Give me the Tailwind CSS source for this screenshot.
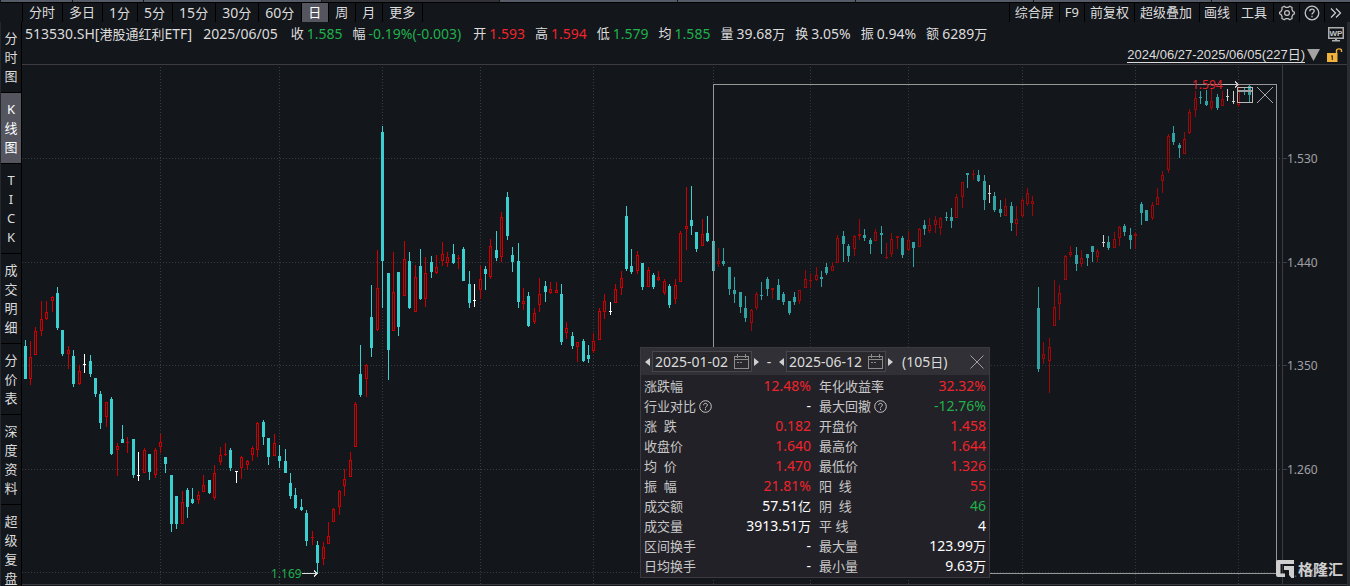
<!DOCTYPE html>
<html lang="zh-CN">
<head>
<meta charset="utf-8">
<title>513530.SH 港股通红利ETF</title>
<script src="https://cdn.jsdelivr.net/npm/@tailwindcss/browser@4"></script>
</head>
<body class="h-screen overflow-hidden bg-[#13161b] font-['Noto_Sans','Noto_Sans_CJK_SC',sans-serif] text-sm text-[#dcdcdc]">
<div class="flex h-full flex-col">
  <div class="flex h-[3px] shrink-0 gap-px border-b border-black bg-[#13161b] pl-px" aria-hidden="true">
    <i class="w-[71px] bg-[#555c68]"></i><i class="w-[70px] bg-[#555c68]"></i><i class="w-[177px] bg-[#555c68]"></i><i class="w-[177px] bg-[#303238]"></i><i class="w-[177px] bg-[#555c68]"></i><i class="w-[177px] bg-[#555c68]"></i><i class="w-[177px] bg-[#555c68]"></i><i class="w-[177px] bg-[#555c68]"></i><i class="flex-1 bg-[#555c68]"></i>
  </div>

  <header class="flex h-[19px] shrink-0 justify-between pr-1 pl-[22px] leading-[19px]">
    <nav class="flex border-l border-black" aria-label="周期">
      <button class="border-r border-black pr-[7px] pl-[6px] text-[13px]">分时</button>
      <button class="border-r border-black pr-[7px] pl-[6px] text-[13px]">多日</button>
      <button class="border-r border-black pr-[7px] pl-[6px]">1<span class="text-[13px]">分</span></button>
      <button class="border-r border-black pr-[7px] pl-[6px]">5<span class="text-[13px]">分</span></button>
      <button class="border-r border-black pr-[7px] pl-[6px]">15<span class="text-[13px]">分</span></button>
      <button class="border-r border-black pr-[7px] pl-[6px]">30<span class="text-[13px]">分</span></button>
      <button class="border-r border-black pr-[7px] pl-[6px]">60<span class="text-[13px]">分</span></button>
      <button class="border-r border-black bg-[#54555f] pr-[7px] pl-[6px] text-[13px] text-white" aria-pressed="true">日</button>
      <button class="border-r border-black pr-[7px] pl-[6px] text-[13px]">周</button>
      <button class="border-r border-black pr-[7px] pl-[6px] text-[13px]">月</button>
      <button class="border-r border-black pr-[7px] pl-[6px] text-[13px]">更多</button>
    </nav>
    <div class="flex text-[13px]">
      <button class="border-l border-black px-[5px]">综合屏</button>
      <button class="border-l border-black px-[5px]">F9</button>
      <button class="border-l border-black px-[5px]">前复权</button>
      <button class="border-l border-black pr-[7px] pl-[5px]">超级叠加</button>
      <button class="border-l border-black pr-[6px] pl-[4px]">画线</button>
      <button class="border-l border-black pr-[6px] pl-[4px]">工具</button>
      <button class="flex w-[26px] items-center justify-center border-l border-black" aria-label="设置">
        <svg class="size-4" viewBox="0 0 16 16" fill="none" stroke="#c4c4c4" stroke-width="1.2"><path d="M5.200 1.200 6.600 2.300h2.800l1.400-1.100 2.300 1.300-.2 1.900 1.200 2.200 1.600.7v1.400l-1.600.7-1.200 2.200.2 1.900-2.300 1.300-1.400-1.100H6.600l-1.400 1.100-2.300-1.300.2-1.900-1.200-2.200L.5 8.700V7.300l1.400-.7 1.200-2.200-.2-1.900z" stroke-linejoin="round"/><circle cx="8" cy="8" r="2.400"/></svg>
      </button>
      <button class="flex w-[25px] items-center justify-center border-l border-black" aria-label="帮助">
        <svg class="size-4" viewBox="0 0 16 16" fill="none" stroke="#c4c4c4" stroke-width="1.300"><circle cx="8" cy="8" r="6.800"/><path d="M5.800 6.300c0-3 4.400-2.800 4.400-.2 0 1.600-2.200 1.600-2.200 3.400M8 10.700v1.500"/></svg>
      </button>
      <button class="flex w-[22px] items-center justify-center border-l border-black" aria-label="展开">
        <svg class="h-3 w-3" viewBox="0 0 12 12" fill="none" stroke="#d0d0d0" stroke-width="1.200"><path d="M1 1.500 5.500 6 1 10.500M6 1.500 10.500 6 6 10.500"/></svg>
      </button>
    </div>
  </header>

  <div class="flex min-h-0 flex-1">
    <nav class="flex w-[22px] shrink-0 flex-col border-l border-[#24282e] text-center text-[13px] leading-[19px]" aria-label="功能">
      <button class="w-full shrink-0 border-r border-b border-black px-[3px] pt-[7px] pb-[6px] break-all">分时图</button>
      <button class="w-full shrink-0 border-r border-b border-black bg-[#54555f] px-[3px] pt-[7px] pb-[6px] break-all text-white" aria-pressed="true">K<br>线图</button>
      <button class="w-full shrink-0 border-r border-b border-black px-[3px] pt-[7px] pb-[6px]">T<br>I<br>C<br>K</button>
      <button class="w-full shrink-0 border-r border-b border-black px-[3px] pt-[7px] pb-[6px] break-all">成交明细</button>
      <button class="w-full shrink-0 border-r border-b border-black px-[3px] pt-[7px] pb-[6px] break-all">分价表</button>
      <button class="w-full shrink-0 border-r border-b border-black px-[3px] pt-[7px] pb-[6px] break-all">深度资料</button>
      <button class="w-full shrink-0 border-r border-b border-black px-[3px] pt-[7px] pb-[6px] break-all">超级复盘</button>
    </nav>

    <main class="flex min-w-0 flex-1 flex-col border-r-[3px] border-[#2a2d32]">
      <div class="flex h-6 shrink-0 items-center justify-between pr-[3px] pl-[3px] whitespace-nowrap">
        <div class="flex gap-[10px]">
          <span>513530.SH[<span class="text-[13px]">港股通红利</span>ETF]</span>
          <span class="pr-[3px] pl-px">2025/06/05</span>
          <span class="flex gap-[3px]"><span class="text-[13px]">收</span><span class="text-[#1fb14c]">1.585</span></span>
          <span class="flex gap-[3px] pr-[2px]"><span class="text-[13px]">幅</span><span class="text-[#1fb14c]">-0.19%(-0.003)</span></span>
          <span class="flex gap-[3px]"><span class="text-[13px]">开</span><span class="text-[#f0242c]">1.593</span></span>
          <span class="flex gap-[3px]"><span class="text-[13px]">高</span><span class="text-[#f0242c]">1.594</span></span>
          <span class="flex gap-[3px]"><span class="text-[13px]">低</span><span class="text-[#1fb14c]">1.579</span></span>
          <span class="flex gap-[3px]"><span class="text-[13px]">均</span><span class="text-[#1fb14c]">1.585</span></span>
          <span class="flex gap-[3px]"><span class="text-[13px]">量</span><span>39.68<span class="text-[13px]">万</span></span></span>
          <span class="flex gap-[3px]"><span class="text-[13px]">换</span><span>3.05%</span></span>
          <span class="flex gap-[3px]"><span class="text-[13px]">振</span><span>0.94%</span></span>
          <span class="flex gap-[3px]"><span class="text-[13px]">额</span><span>6289<span class="text-[13px]">万</span></span></span>
        </div>
        <button aria-label="WP">
          <svg class="h-[15px] w-4" viewBox="0 0 16 15"><rect x=".75" y=".75" width="14.500" height="10.500" fill="none" stroke="#adadad" stroke-width="1.500"/><path d="M7 11h2v2h3v1.500H4V13h3z" fill="#adadad"/><text x="8" y="8.800" text-anchor="middle" font-size="8" font-weight="700" fill="#c4c4c4" font-family="Liberation Sans">WP</text></svg>
        </button>
      </div>
      <div class="flex h-[18px] shrink-0 items-center justify-end gap-[2px] pr-1">
        <a href="#" class="border-b border-[#dcdcdc] font-['Liberation_Sans','Noto_Sans_CJK_SC',sans-serif] text-[13px] leading-[15px]">2024/06/27-2025/06/05(227日)</a>
        <button aria-label="选择区间"><svg class="h-3 w-[13px]" viewBox="0 0 13 12"><path d="M0 0h13L6.500 12z" fill="#a3a3a3"/></svg></button>
        <button class="ml-[5px]" aria-label="锁定"><svg class="h-[14px] w-4" viewBox="0 0 16 14"><path d="M0 5h10.500v9H0z" fill="#f0b23c"/><path d="M9.500 5V2.500C9.500.3 14.500.3 14.500 2.500V4" fill="none" stroke="#f0b23c" stroke-width="1.400"/><path d="M4 8h2M5.300 7.500v4.500" stroke="#3a2b10" stroke-width="1.200"/></svg></button>
      </div>

      <section class="relative min-h-0 flex-1" aria-label="K线图">
        <svg id="chart" class="block h-full w-full" viewBox="22 64 1325 522" preserveAspectRatio="xMinYMin meet" font-size="12" shape-rendering="crispEdges">
          <path d="M22 64.500H1347M22 584.500H1347M1282.500 64V584M1282 158.500h5M1282 262.500h5M1282 365.500h5M1282 469.500h5" stroke="#3b3b40"/>
          <path d="M22 158.500H1282M22 262.500H1282M22 365.500H1282M22 469.500H1282M22 572.500H1282M160.500 67V584M279.500 67V584M382.500 67V584M480.500 67V584M593.500 67V584M713.500 67V584M810.500 67V584M908.500 67V584M1022.500 67V584M1135.500 67V584M1238.500 67V584" stroke="#3c3d40" stroke-dasharray="1 2"/>
          <g id="candles"></g>
          <rect x="713" y="84" width="564" height="490" fill="#181c1c" fill-opacity=".22"/>
          <path d="M713.500 84V573.500H1276.500V84.500H713" fill="none" stroke="#979797"/>
          <g fill="#a0a0a4"><text x="1287" y="163" >1.530</text><text x="1287" y="267">1.440</text><text x="1287" y="370">1.350</text><text x="1287" y="474">1.260</text><text x="1287" y="577" fill="#55585e">1.170</text></g>
          <text x="271" y="578" fill="#1fb14c">1.169</text>
          <path d="M302 573.500h15M314 570.500l3 3-3 3" fill="none" stroke="#dcdcdc"/>
          <text x="1192" y="89" fill="#e2202a">1.594</text>
          <path d="M1223 84.500h15M1235 81.500l3 3-3 3" fill="none" stroke="#c8c8c8"/>
          <g fill="#cfcfcf" shape-rendering="auto">
            <path d="M1278 560h16v4h-13.500v9.500h4.500v3.500h-7a2 2 0 0 1-2-2v-13a2 2 0 0 1 2-2z"/><path d="M1284 566h10v12h-2.500l-2.500-3v-5h-5z"/>
            <text x="1298" y="575" font-size="15" font-weight="700">格隆汇</text>
          </g>
        </svg>

        <button class="absolute top-[23px] left-[1215px] flex size-4 items-start border border-[#b8b8b8] pt-[2px]" aria-label="还原"><span class="block h-[2px] w-full bg-[#a0a0a0]"></span></button>
        <button class="absolute top-[23px] left-[1235px]" aria-label="关闭区间"><svg class="size-4" viewBox="0 0 16 16" stroke="#a8a8a8"><path d="M0 0l16 16M16 0 0 16"/></svg></button>

        <div class="absolute top-[283px] left-[618px] w-[350px] border border-[#3a393f] bg-[#222127]">
          <div class="flex h-[27px] items-center bg-[#313036] pr-[5px] pl-1 whitespace-nowrap">
            <button aria-label="起始日前移"><svg class="h-2 w-[5px]" viewBox="0 0 5 8"><path d="M5 0v8L0 4z" fill="#d0d0d0"/></svg></button>
            <label class="ml-[2px] flex h-[21px] w-[100px] items-center border border-[#47464b] bg-[#29282d] pl-[2px]">
              <input class="min-w-0 flex-1 bg-transparent text-[#dcdcdc]" type="text" value="2025-01-02" aria-label="起始日期">
              <svg class="mr-[2px] h-[15px] w-[15px] shrink-0" viewBox="0 0 15 15" fill="none" stroke="#8c8c8c" shape-rendering="crispEdges"><path d="M.5 2.500h14v12H.5zM.5 5.500h14M3.500 0v4M11.500 0v4M3 8.500h2M6 8.500h2"/></svg>
            </label>
            <button class="ml-[2px]" aria-label="起始日后移"><svg class="h-2 w-[5px]" viewBox="0 0 5 8"><path d="M0 0v8l5-4z" fill="#d0d0d0"/></svg></button>
            <span class="w-[20px] text-center">-</span>
            <button aria-label="结束日前移"><svg class="h-2 w-[5px]" viewBox="0 0 5 8"><path d="M5 0v8L0 4z" fill="#d0d0d0"/></svg></button>
            <label class="ml-[2px] flex h-[21px] w-[100px] items-center border border-[#47464b] bg-[#29282d] pl-[2px]">
              <input class="min-w-0 flex-1 bg-transparent text-[#dcdcdc]" type="text" value="2025-06-12" aria-label="结束日期">
              <svg class="mr-[2px] h-[15px] w-[15px] shrink-0" viewBox="0 0 15 15" fill="none" stroke="#8c8c8c" shape-rendering="crispEdges"><path d="M.5 2.500h14v12H.5zM.5 5.500h14M3.500 0v4M11.500 0v4M3 8.500h2M6 8.500h2"/></svg>
            </label>
            <button class="ml-[2px]" aria-label="结束日后移"><svg class="h-2 w-[5px]" viewBox="0 0 5 8"><path d="M0 0v8l5-4z" fill="#d0d0d0"/></svg></button>
            <span class="ml-[9px]">(105<span class="text-[13px]">日</span>)</span>
            <button class="ml-auto" aria-label="关闭"><svg class="size-[14px]" viewBox="0 0 14 14" stroke="#a0a0a0"><path d="M.5.5l13 13M13.500.5l-13 13"/></svg></button>
          </div>
          <table class="mx-[3px] mt-px mb-px w-[342px] table-fixed leading-5 whitespace-nowrap text-white">
            <colgroup><col class="w-[75px]"><col class="w-[92px]"><col class="w-[83px]"><col class="w-[92px]"></colgroup>
            <tbody class="[&_td]:p-0 [&_td]:text-right [&_th]:p-0 [&_th]:text-left [&_th]:text-[13px] [&_th]:font-normal [&_th]:text-[#c8c8c8] [&_tr]:h-5 [&_th:nth-child(3)]:pl-2">
              <tr><th>涨跌幅</th><td class="text-[#f0242c]">12.48%</td><th>年化收益率</th><td class="text-[#f0242c]">32.32%</td></tr>
              <tr><th><span class="flex items-center gap-[3px]">行业对比<svg class="size-[13px]" viewBox="0 0 13 13" fill="none" stroke="#c8c8c8"><circle cx="6.500" cy="6.500" r="5.800"/><path d="M4.600 5.200c0-2.500 3.800-2.400 3.800-.1 0 1.300-1.900 1.300-1.900 2.600M6.500 8.700v1.400"/></svg></span></th><td>-</td><th><span class="flex items-center gap-[3px]">最大回撤<svg class="size-[13px]" viewBox="0 0 13 13" fill="none" stroke="#c8c8c8"><circle cx="6.500" cy="6.500" r="5.800"/><path d="M4.600 5.200c0-2.500 3.800-2.400 3.800-.1 0 1.300-1.900 1.300-1.900 2.600M6.500 8.700v1.400"/></svg></span></th><td class="text-[#1fb14c]">-12.76%</td></tr>
              <tr><th>涨&nbsp;&nbsp;跌</th><td class="text-[#f0242c]">0.182</td><th>开盘价</th><td class="text-[#f0242c]">1.458</td></tr>
              <tr><th>收盘价</th><td class="text-[#f0242c]">1.640</td><th>最高价</th><td class="text-[#f0242c]">1.644</td></tr>
              <tr><th>均&nbsp;&nbsp;价</th><td class="text-[#f0242c]">1.470</td><th>最低价</th><td class="text-[#f0242c]">1.326</td></tr>
              <tr><th>振&nbsp;&nbsp;幅</th><td class="text-[#f0242c]">21.81%</td><th>阳&nbsp;&nbsp;线</th><td class="text-[#f0242c]">55</td></tr>
              <tr><th>成交额</th><td>57.51<span class="text-[13px]">亿</span></td><th>阴&nbsp;&nbsp;线</th><td class="text-[#1fb14c]">46</td></tr>
              <tr><th>成交量</th><td>3913.51<span class="text-[13px]">万</span></td><th>平&nbsp;线</th><td>4</td></tr>
              <tr><th>区间换手</th><td>-</td><th>最大量</th><td>123.99<span class="text-[13px]">万</span></td></tr>
              <tr><th>日均换手</th><td>-</td><th>最小量</th><td>9.63<span class="text-[13px]">万</span></td></tr>
            </tbody>
          </table>
        </div>
      </section>
    </main>
  </div>
</div>
<script>
// One candle per entry: x, high, body top, body bottom, low, kind (c falling, r rising, w flat).
const data = `25 340 346 379 379 c;30 341 357 379 385 r;35 327 331 355 355 r;41 301 319 331 336 r;46 301 312 319 320 r;52 296 297 301 312 r;57 287 293 328 330 c;62 330 330 354 356 c;68 346 350 354 369 r;73 350 356 384 387 c;79 365 371 384 385 r;84 354 364 365 373 w;90 355 361 374 377 c;95 378 378 394 397 c;100 391 394 423 429 c;106 402 402 417 427 r;111 397 399 454 455 c;117 443 446 450 476 r;122 425 439 443 443 c;127 437 442 443 453 r;133 439 439 475 478 c;138 452 475 476 481 w;144 448 450 473 473 r;149 454 454 472 480 c;155 448 450 475 478 r;160 434 442 447 453 r;165 457 457 464 473 c;171 475 475 524 532 c;176 496 496 524 529 c;182 491 502 524 524 r;187 488 490 507 518 c;192 488 499 503 504 c;198 491 495 500 504 r;203 475 485 492 492 r;209 480 480 493 494 c;214 465 473 498 500 r;220 447 455 462 465 r;225 443 454 455 456 r;230 448 450 468 471 c;236 471 471 472 483 w;241 456 457 468 479 r;247 460 461 465 470 r;252 446 448 455 461 r;257 422 423 450 457 r;263 420 422 437 445 c;268 438 438 457 465 c;274 434 443 456 456 r;279 445 456 461 468 c;285 449 461 473 473 c;290 473 483 496 499 c;295 488 495 508 509 c;301 499 507 510 511 c;306 510 513 541 546 c;312 531 537 538 545 r;317 541 545 563 573 c;323 542 547 559 565 r;328 522 536 544 544 r;333 508 509 522 522 r;339 490 491 507 515 r;344 469 479 486 496 r;350 452 460 477 477 r;355 402 404 447 447 r;360 345 374 395 397 c;366 364 365 379 397 r;371 285 317 348 357 c;377 250 288 330 331 r;382 126 132 261 308 c;388 273 273 350 380 c;393 252 292 331 331 r;398 272 272 327 336 c;404 241 259 296 296 r;409 252 261 308 309 c;415 265 277 312 312 r;420 249 266 299 300 c;425 257 273 299 307 r;431 256 262 272 278 c;436 255 267 273 274 r;442 242 254 261 266 r;447 252 257 263 267 r;453 244 254 263 264 c;458 255 258 259 269 r;463 247 249 281 281 c;469 271 284 303 308 c;474 284 300 301 307 w;480 266 279 290 299 r;485 266 269 274 290 c;490 239 246 277 279 r;496 231 250 258 261 c;501 212 217 257 262 r;507 192 197 236 240 c;512 247 255 262 272 c;518 243 261 302 308 c;523 288 301 304 310 r;528 292 296 326 327 c;534 308 313 322 324 r;539 278 294 305 312 r;545 281 286 292 302 c;550 282 289 293 294 r;556 282 290 293 293 r;561 284 294 342 345 c;566 322 328 333 339 r;572 332 336 346 349 c;577 342 342 347 362 r;583 339 341 361 362 c;588 345 355 359 363 c;593 333 341 351 353 r;599 308 311 340 340 r;604 294 301 312 319 r;610 302 311 312 315 w;615 284 289 303 303 r;621 271 278 288 295 r;626 206 216 269 271 c;631 249 266 272 274 c;637 251 255 271 274 r;642 263 263 287 290 c;648 267 270 287 287 r;653 273 275 287 289 c;658 271 277 280 281 r;664 279 281 293 295 r;669 284 286 305 308 c;675 279 285 299 304 r;680 231 233 282 282 r;686 187 226 229 250 r;691 186 220 226 235 c;696 232 232 249 252 c;702 219 234 246 246 r;707 216 233 241 242 c;713 241 241 271 271 c;718 248 261 264 267 r;723 248 261 264 266 c;729 267 267 289 295 c;734 277 290 294 303 c;740 292 292 307 313 c;745 296 308 318 322 c;751 309 310 323 331 r;756 292 294 308 310 r;761 282 295 296 300 c;767 277 279 289 296 c;772 288 288 290 299 r;778 279 285 300 300 c;783 292 294 302 305 c;789 301 301 313 315 c;794 292 297 302 305 c;799 290 290 301 304 r;805 270 279 288 288 r;810 273 280 281 288 r;816 267 275 280 281 r;821 271 277 279 287 c;826 263 267 273 275 c;832 262 266 271 271 r;837 235 238 263 263 r;843 231 236 244 262 c;848 244 246 256 262 c;854 235 236 249 256 r;859 219 234 236 240 r;864 229 235 238 241 c;870 238 240 244 254 c;875 229 232 241 241 r;881 226 233 235 254 c;886 243 257 258 259 r;891 233 239 254 257 r;897 236 236 238 249 r;902 236 238 255 258 c;908 231 240 250 251 r;913 242 242 248 267 c;919 228 229 247 247 r;924 220 225 229 235 c;929 218 225 231 233 r;935 216 220 225 233 r;940 217 218 228 235 r;946 212 217 218 221 c;951 208 217 221 228 c;956 194 197 218 218 r;962 182 182 197 208 r;967 173 173 175 188 c;973 170 174 175 180 r;978 170 175 181 182 c;984 175 181 200 210 c;989 185 193 194 203 w;994 192 196 210 212 c;1000 200 209 213 217 c;1005 198 206 216 216 r;1011 202 206 223 231 c;1016 206 219 224 236 r;1022 198 200 216 218 r;1027 188 193 204 206 r;1032 196 201 204 216 r;1038 287 308 369 372 c;1043 342 354 359 364 r;1049 338 347 361 393 r;1054 280 307 326 326 r;1059 285 293 304 320 r;1065 255 256 280 280 r;1070 246 252 255 257 r;1076 247 255 264 271 c;1081 250 258 264 267 r;1087 254 254 258 266 c;1092 246 246 252 262 c;1097 249 251 257 262 r;1103 235 242 243 247 w;1108 236 242 248 250 c;1114 232 239 248 248 r;1119 226 227 238 246 r;1124 224 226 232 236 c;1130 228 235 240 249 c;1135 232 234 236 249 r;1141 202 204 213 225 c;1146 210 210 221 221 c;1152 202 205 218 220 r;1157 188 197 205 205 r;1162 171 175 181 193 r;1168 134 136 170 173 r;1173 126 133 142 145 c;1179 143 145 148 158 c;1184 132 139 154 154 r;1189 109 112 133 134 r;1195 91 98 110 117 r;1200 91 97 98 104 c;1206 90 101 105 106 c;1211 89 101 108 110 r;1217 94 97 108 110 c;1222 91 99 106 106 r;1227 89 96 97 101 w;1233 91 101 102 104 w;1238 84 90 105 107 r;1244 88 90 91 95 c;1249 85 86 95 102 c`;
const bright = {c: '#3bcfcf', r: '#cc0000', w: '#ffffff'};
const dim = {c: '#3bc8c8', r: '#c80202', w: '#ffffff'};
const layer = document.getElementById('candles');
const box = (x, y, w, h, fill) => {
  const e = document.createElementNS('http://www.w3.org/2000/svg', 'rect');
  Object.entries({x, y, width: w, height: h, fill}).forEach(([k, v]) => e.setAttribute(k, v));
  layer.appendChild(e);
};
data.split(';').forEach(row => {
  const f = row.split(' ');
  const [x, hi, top, bot, lo] = f.map(Number);
  const color = (x > 713 ? dim : bright)[f[5]];
  box(x, hi, 1, lo - hi, color);
  box(x - 1, top, 3, bot - top, color);
  if (f[5] === 'r' && bot - top > 2) box(x, top + 1, 1, bot - top - 2, '#13161b');
});
</script>
</body>
</html>
